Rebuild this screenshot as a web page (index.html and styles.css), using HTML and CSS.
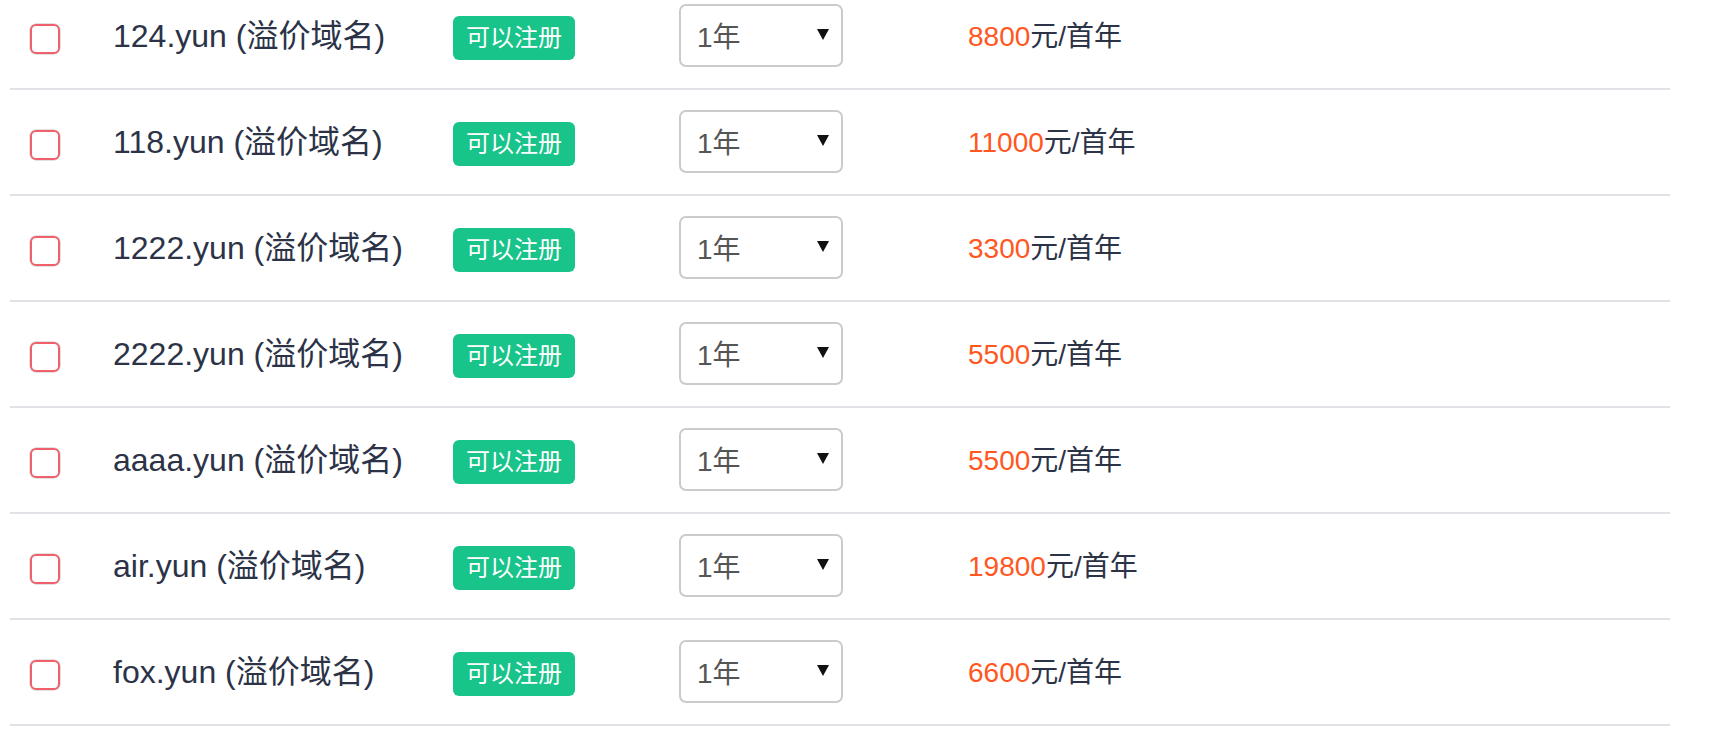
FILE: index.html
```html
<!DOCTYPE html>
<html lang="zh-CN">
<head>
<meta charset="utf-8">
<title>域名列表</title>
<link rel="stylesheet" href="styles.css">
</head>
<body>
<div class="list">
  <div class="row">
    <div class="cell-check"><span class="check"></span></div>
    <div class="name">124.yun (溢价域名)</div>
    <div class="cell-badge"><span class="badge">可以注册</span></div>
    <div class="cell-select"><div class="select"><span class="val">1年</span><svg class="arrow" width="12" height="12" viewBox="0 0 12 12"><polygon points="0,1 12,1 6,12" fill="#111"/></svg></div></div>
    <div class="price"><span class="num">8800</span>元/首年</div>
  </div>
  <div class="row">
    <div class="cell-check"><span class="check"></span></div>
    <div class="name">118.yun (溢价域名)</div>
    <div class="cell-badge"><span class="badge">可以注册</span></div>
    <div class="cell-select"><div class="select"><span class="val">1年</span><svg class="arrow" width="12" height="12" viewBox="0 0 12 12"><polygon points="0,1 12,1 6,12" fill="#111"/></svg></div></div>
    <div class="price"><span class="num">11000</span>元/首年</div>
  </div>
  <div class="row">
    <div class="cell-check"><span class="check"></span></div>
    <div class="name">1222.yun (溢价域名)</div>
    <div class="cell-badge"><span class="badge">可以注册</span></div>
    <div class="cell-select"><div class="select"><span class="val">1年</span><svg class="arrow" width="12" height="12" viewBox="0 0 12 12"><polygon points="0,1 12,1 6,12" fill="#111"/></svg></div></div>
    <div class="price"><span class="num">3300</span>元/首年</div>
  </div>
  <div class="row">
    <div class="cell-check"><span class="check"></span></div>
    <div class="name">2222.yun (溢价域名)</div>
    <div class="cell-badge"><span class="badge">可以注册</span></div>
    <div class="cell-select"><div class="select"><span class="val">1年</span><svg class="arrow" width="12" height="12" viewBox="0 0 12 12"><polygon points="0,1 12,1 6,12" fill="#111"/></svg></div></div>
    <div class="price"><span class="num">5500</span>元/首年</div>
  </div>
  <div class="row">
    <div class="cell-check"><span class="check"></span></div>
    <div class="name">aaaa.yun (溢价域名)</div>
    <div class="cell-badge"><span class="badge">可以注册</span></div>
    <div class="cell-select"><div class="select"><span class="val">1年</span><svg class="arrow" width="12" height="12" viewBox="0 0 12 12"><polygon points="0,1 12,1 6,12" fill="#111"/></svg></div></div>
    <div class="price"><span class="num">5500</span>元/首年</div>
  </div>
  <div class="row">
    <div class="cell-check"><span class="check"></span></div>
    <div class="name">air.yun (溢价域名)</div>
    <div class="cell-badge"><span class="badge">可以注册</span></div>
    <div class="cell-select"><div class="select"><span class="val">1年</span><svg class="arrow" width="12" height="12" viewBox="0 0 12 12"><polygon points="0,1 12,1 6,12" fill="#111"/></svg></div></div>
    <div class="price"><span class="num">19800</span>元/首年</div>
  </div>
  <div class="row">
    <div class="cell-check"><span class="check"></span></div>
    <div class="name">fox.yun (溢价域名)</div>
    <div class="cell-badge"><span class="badge">可以注册</span></div>
    <div class="cell-select"><div class="select"><span class="val">1年</span><svg class="arrow" width="12" height="12" viewBox="0 0 12 12"><polygon points="0,1 12,1 6,12" fill="#111"/></svg></div></div>
    <div class="price"><span class="num">6600</span>元/首年</div>
  </div>
</div>
</body>
</html>
```

FILE: styles.css
```css
html, body {
  margin: 0;
  padding: 0;
  background: #fff;
  overflow: hidden;
}

body {
  font-family: "Liberation Sans", "Noto Sans CJK SC", sans-serif;
  color: #2c3347;
}

.list {
  width: 1660px;
  margin: -16px 0 0 10px;
}

.row {
  display: grid;
  grid-template-columns: 103px 340px 226px 289px 1fr;
  align-items: center;
  height: 104px;
  border-bottom: 2px solid #e1e1e7;
}

.cell-check {
  padding-left: 20px;
  display: flex;
  align-items: center;
  padding-top: 6px;
}

.check {
  display: block;
  width: 30px;
  height: 30px;
  box-sizing: border-box;
  border: 2px solid #f0606b;
  border-radius: 6px;
  box-shadow: 0 0 0 0.5px rgba(80, 80, 80, 0.35);
}

.name {
  font-size: 32px;
  line-height: 40px;
  white-space: nowrap;
}

.cell-badge {
  display: flex;
  padding-top: 3px;
}

.badge {
  display: inline-block;
  background: #19c48a;
  color: #fff;
  font-size: 24px;
  line-height: 44px;
  height: 44px;
  padding: 0 13px;
  border-radius: 6px;
  white-space: nowrap;
}

.cell-select {
  display: flex;
  padding-bottom: 2px;
}

.select {
  box-sizing: border-box;
  width: 164px;
  height: 63px;
  border: 2px solid #cbcbcb;
  border-radius: 7px;
  display: flex;
  align-items: center;
  justify-content: space-between;
  padding: 0 12px 0 16px;
  background: #fff;
}

.val {
  font-size: 28px;
  color: #555;
}

.arrow {
  display: block;
  margin-top: -2px;
}

.price {
  font-size: 28px;
  white-space: nowrap;
  color: #2c3347;
  padding-bottom: 4px;
}

.num {
  color: #ff5722;
}
```
